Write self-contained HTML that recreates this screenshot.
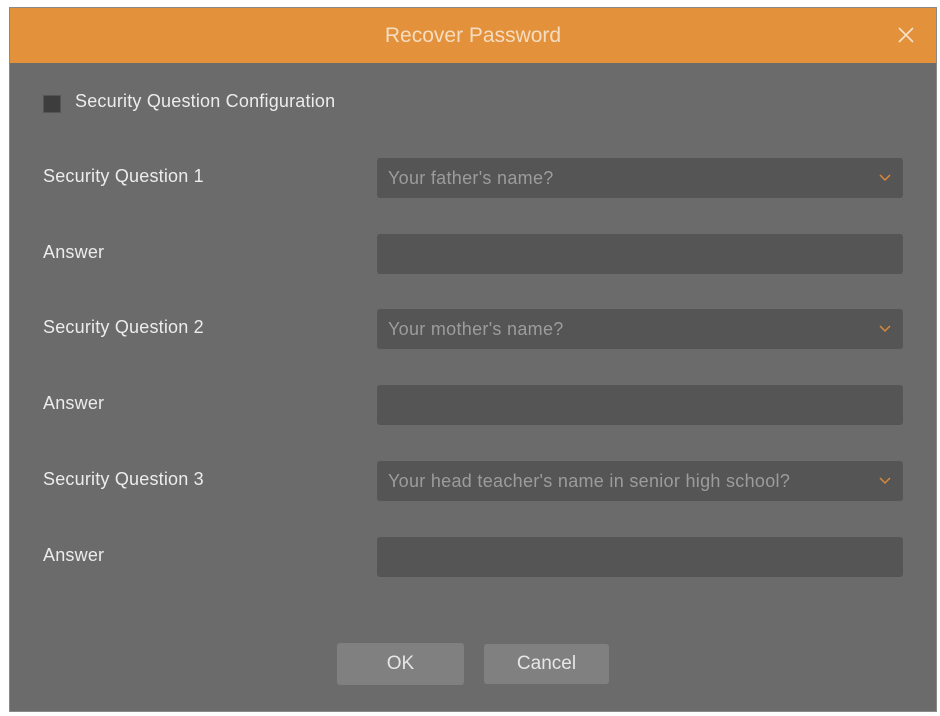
<!DOCTYPE html>
<html><head><style>
body{margin:0;width:940px;height:716px;background:#fff;font-family:"Liberation Sans",Arial,sans-serif;position:relative;overflow:hidden}
.dlg{position:absolute;left:9px;top:7px;width:928px;height:705px;background:#6b6b6b;border:1px solid #8a8a8a;box-sizing:border-box}
.hdr{position:absolute;left:0;top:0;right:0;height:55px;background:#e3913a;color:#f6dcc0;font-size:21px;text-align:center;line-height:55px}
.x{position:absolute;right:22px;top:19px}
.lbl{position:absolute;left:33px;color:#ececec;font-size:18px;letter-spacing:0.2px}
.box{position:absolute;left:367px;width:526px;height:40px;background:#555555;border-radius:3px;color:#9c9c9c;font-size:18px;letter-spacing:0.3px;line-height:40px;padding-left:11px;box-sizing:border-box}
.box svg{position:absolute;right:12px;top:16px}
.btn{position:absolute;top:635px;height:42px;background:#808080;border-radius:3px;color:#e6e6e6;font-size:19px;text-align:center;line-height:42px}
.cb{position:absolute;left:33px;top:87px;width:16px;height:16px;background:#3d3d3d;border:1px solid #555}
</style></head><body>
<div class="dlg">
<div class="hdr">Recover Password<svg class="x" width="16" height="16"><path d="M1 1L15 15M15 1L1 15" stroke="#f5e3cf" stroke-width="1.6"/></svg></div>
<div class="cb"></div>
<div class="lbl" style="left:65px;top:83px">Security Question Configuration</div>
<div class="lbl" style="top:158px">Security Question 1</div>
<div class="box" style="top:150px">Your father's name?<svg width="12" height="8"><path d="M1 1L6 6L11 1" stroke="#d8893a" stroke-width="1.5" fill="none"/></svg></div>
<div class="lbl" style="top:234px">Answer</div>
<div class="box" style="top:226px"></div>
<div class="lbl" style="top:309px">Security Question 2</div>
<div class="box" style="top:301px">Your mother's name?<svg width="12" height="8"><path d="M1 1L6 6L11 1" stroke="#d8893a" stroke-width="1.5" fill="none"/></svg></div>
<div class="lbl" style="top:385px">Answer</div>
<div class="box" style="top:377px"></div>
<div class="lbl" style="top:461px">Security Question 3</div>
<div class="box" style="top:453px">Your head teacher's name in senior high school?<svg width="12" height="8"><path d="M1 1L6 6L11 1" stroke="#d8893a" stroke-width="1.5" fill="none"/></svg></div>
<div class="lbl" style="top:537px">Answer</div>
<div class="box" style="top:529px"></div>
<div class="btn" style="left:327px;width:127px">OK</div>
<div class="btn" style="left:474px;width:125px;top:636px;height:40px;line-height:40px">Cancel</div>
</div>
</body></html>
